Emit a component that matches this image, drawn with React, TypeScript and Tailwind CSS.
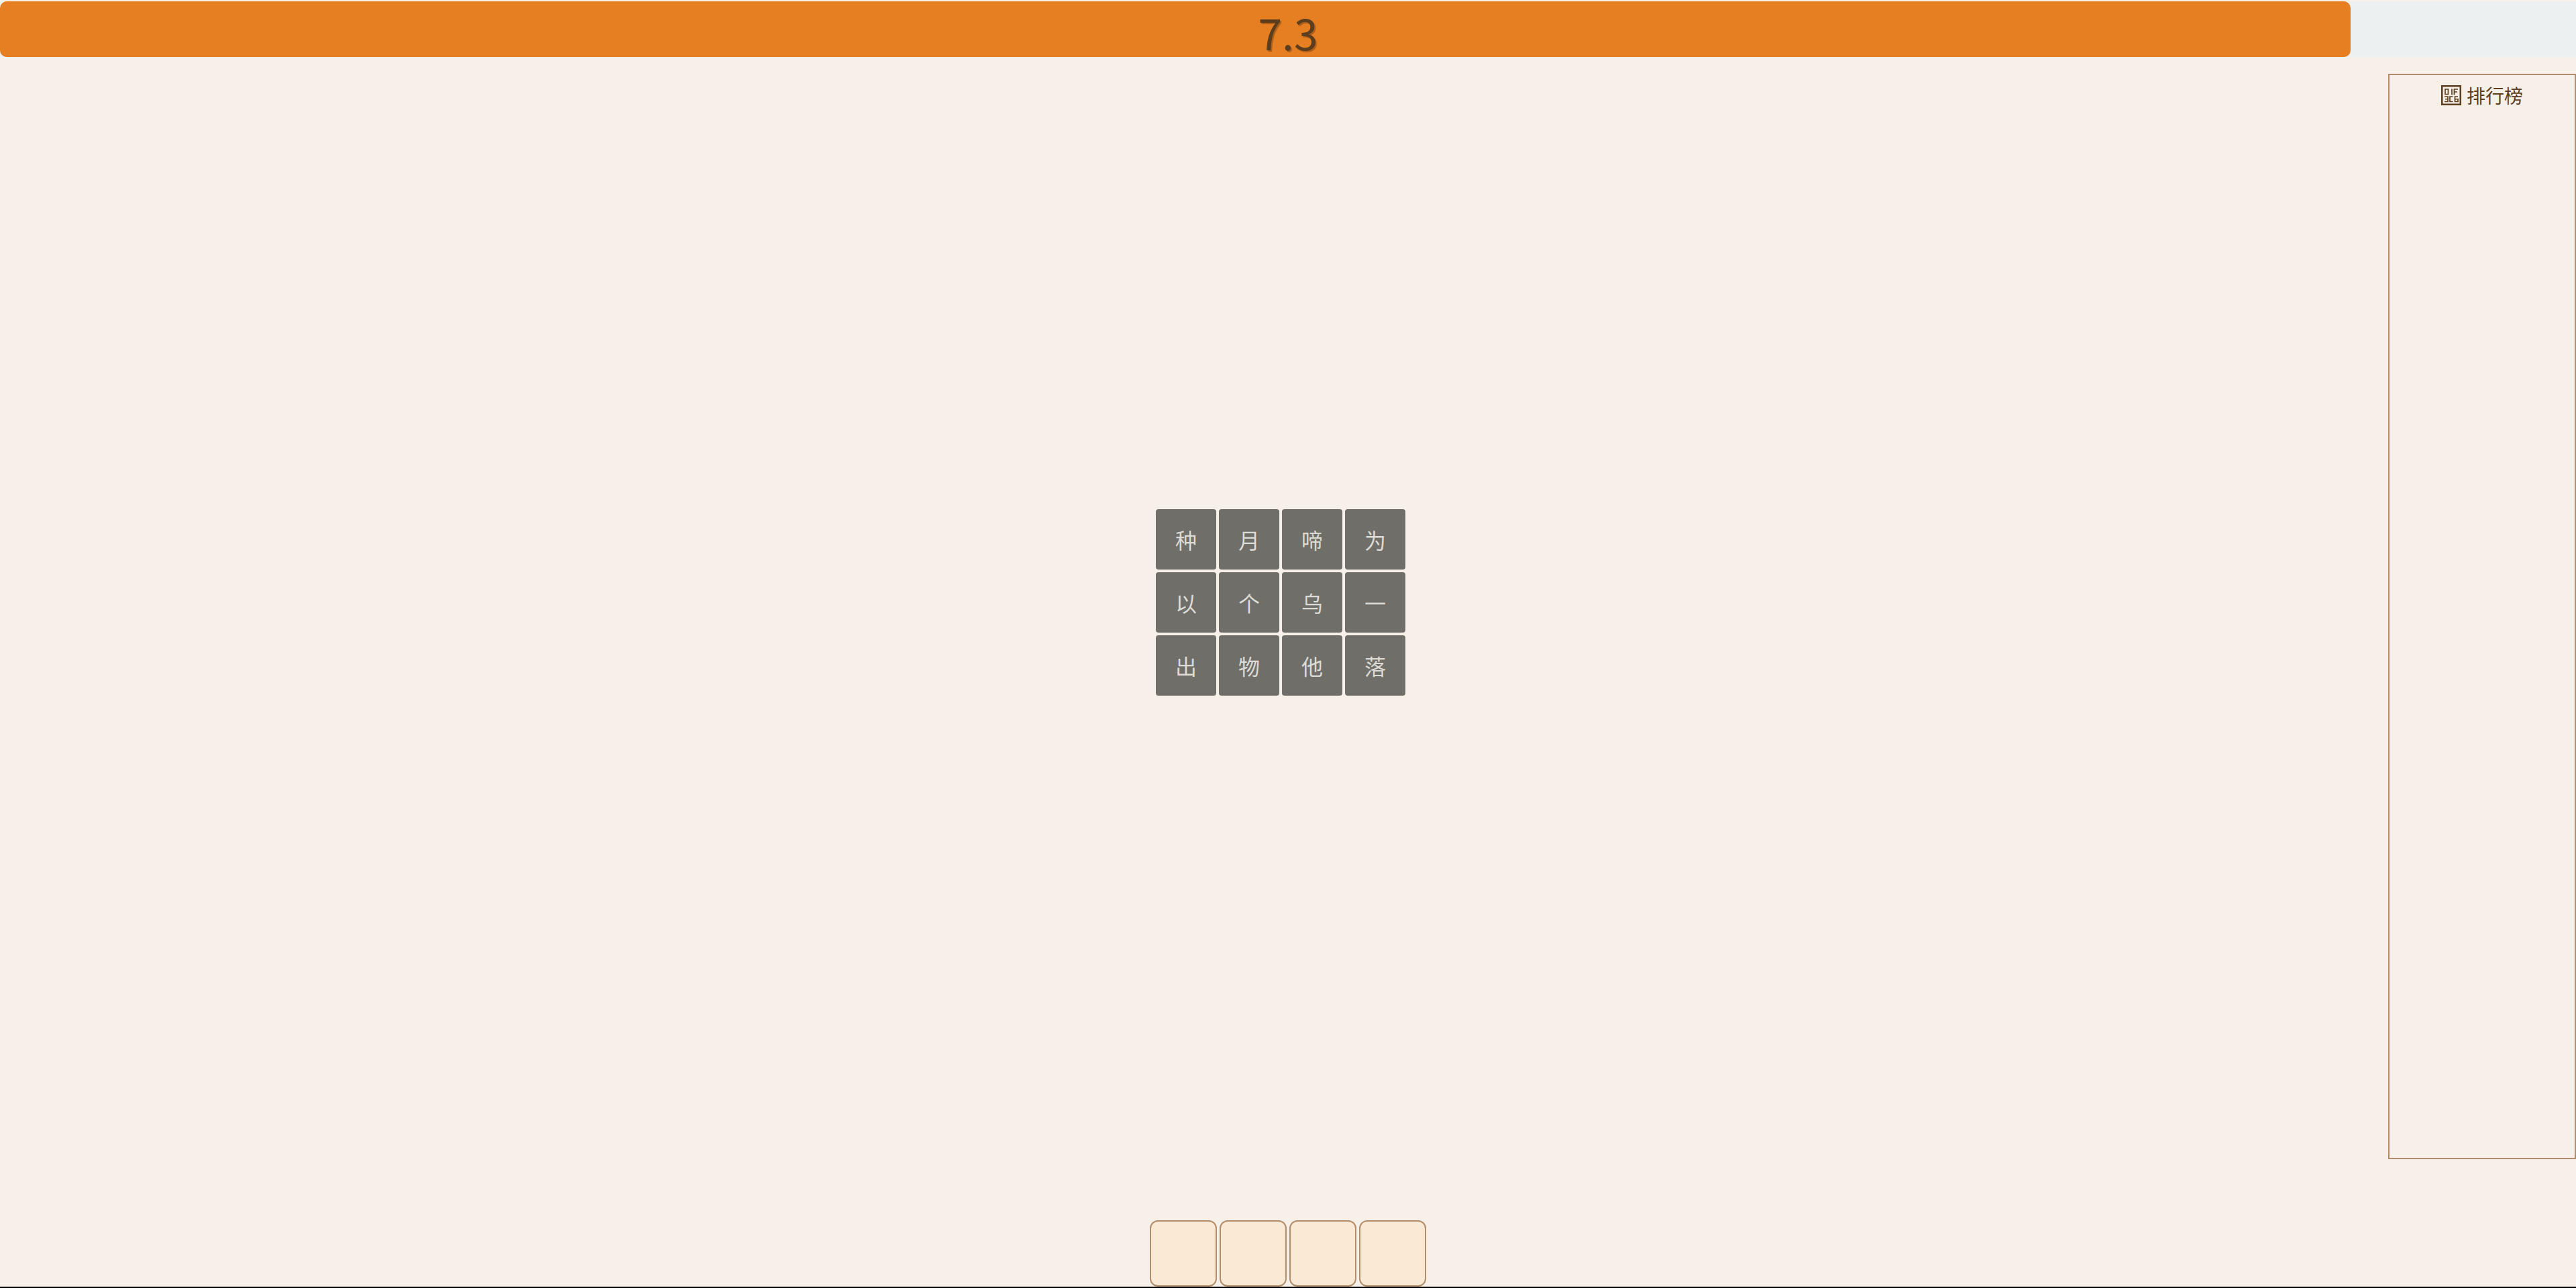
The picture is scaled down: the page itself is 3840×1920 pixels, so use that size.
const tiles = ["种", "月", "啼", "为", "以", "个", "乌", "一", "出", "物", "他", "落"];

function TofuTrophy() {
  return (
    <svg viewBox="0 0 30 30" className="h-[30px] w-[30px] shrink-0" fill="none" stroke="currentColor" strokeWidth="1.700">
      <rect x="1.250" y="1.250" width="27.500" height="27.500" strokeWidth="2.500" />
      <path d="M6 6h4.500v7.500h-4.500z" />
      <path d="M16 5.500v9" />
      <path d="M25 6h-5.500v8.500M19.500 10h4.500" />
      <path d="M5 17h5v7.500h-5M6 20.750h4" />
      <path d="M17.500 17h-4.500v7.500h4.500" />
      <path d="M25 17h-4.500v7.500h4.500v-3.750h-4.500" />
    </svg>
  );
}

export default function App() {
  return (
    <div className="flex h-screen flex-col overflow-hidden border-b-2 border-black bg-[#f6f0e8] font-['Noto_Sans_CJK_SC',sans-serif]">
      <header className="mt-[2px] flex h-[83px] shrink-0 bg-[#ecf0f1]">
        <div className="flex w-[3504px] items-center justify-center rounded-[10px] bg-[#e67e22] pl-[336px] pt-[6px] text-[64px] leading-none text-[#5c3d1e] [text-shadow:2px_2px_1px_rgba(0,0,0,0.25)]">
          7.3
        </div>
      </header>
      <div className="flex min-h-0 flex-1">
        <main className="flex min-w-0 flex-1 flex-col">
          <div className="mt-[674px] flex justify-center pl-[258px]">
            <div className="grid grid-cols-[repeat(4,90px)] grid-rows-[repeat(3,90px)] gap-[4px]">
              {tiles.map((t) => (
                <div key={t} className="flex items-center justify-center rounded-[4px] bg-[#6f6e68] text-[32px] text-[#dcdbd6]">
                  {t}
                </div>
              ))}
            </div>
          </div>
          <div className="mt-auto flex justify-center gap-[4px] pl-[280px]">
            {[0, 1, 2, 3].map((i) => (
              <div key={i} className="h-[99px] w-[100px] rounded-[12px] border-2 border-[#b08d6b] bg-[#fae9d4]" />
            ))}
          </div>
        </main>
        <aside className="mt-[25px] h-[1618px] w-[280px] shrink-0 border-2 border-[#b08d6b] pt-[10px] text-[#5c3d1e]">
          <div className="flex items-center justify-center gap-[8px] text-[28px] leading-[40px]">
            <TofuTrophy />
            <span>排行榜</span>
          </div>
        </aside>
      </div>
    </div>
  );
}
